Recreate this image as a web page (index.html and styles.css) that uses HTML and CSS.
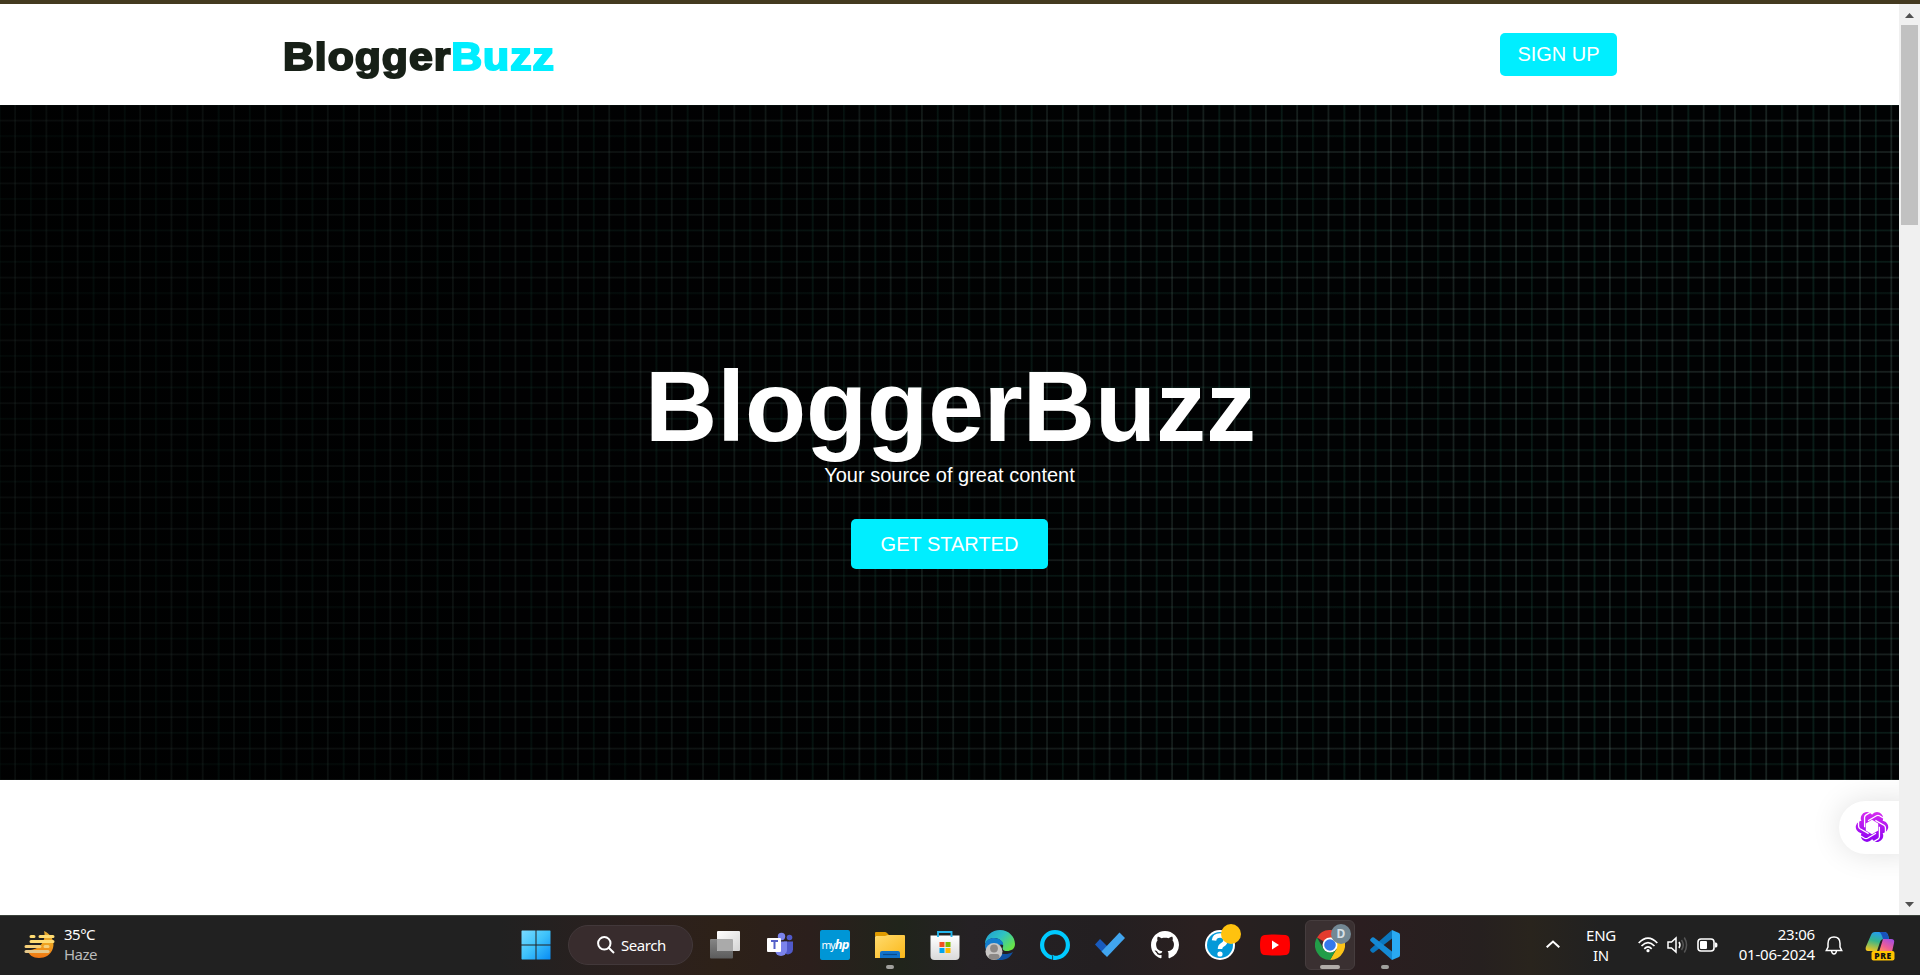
FILE: index.html
```html
<!DOCTYPE html>
<html lang="en">
<head>
<meta charset="utf-8">
<title>BloggerBuzz</title>
<link rel="stylesheet" href="styles.css">
</head>
<body>
<div class="desktop">
  <div class="window-edge"></div>
  <div class="browser">
    <div class="page">
      <header class="header">
        <div class="logo">Blogger<span class="logo-accent">Buzz</span></div>
        <a class="btn signup">SIGN UP</a>
      </header>
      <main class="hero">
        <h1 class="hero-title">BloggerBuzz</h1>
        <p class="hero-sub">Your source of great content</p>
        <a class="btn start">GET STARTED</a>
      </main>
      <div class="assistant">
        <svg width="34" height="34" viewBox="-17 -17 34 34">
          <defs>
            <linearGradient id="pg" gradientUnits="userSpaceOnUse" x1="0" y1="-16" x2="0" y2="16"><stop offset="0" stop-color="#d92cf0"/><stop offset="1" stop-color="#8a00f2"/></linearGradient>
            <mask id="swirl" maskUnits="userSpaceOnUse" x="-17" y="-17" width="34" height="34">
              <g fill="#fff">
                <circle r="11"/>
                <circle id="lobe" cx="5" cy="-8.700" r="6.200"/>
                <use href="#lobe" transform="rotate(60)"/><use href="#lobe" transform="rotate(120)"/><use href="#lobe" transform="rotate(180)"/><use href="#lobe" transform="rotate(240)"/><use href="#lobe" transform="rotate(300)"/>
              </g>
              <path d="M0 -7.200L6.200 -3.600V3.600L0 7.200L-6.200 3.600V-3.600z" fill="#000"/>
              <g fill="none" stroke="#000" stroke-width="1.300">
                <path id="seam" d="M-4 -6.200L4.500 -11.200Q6 -12 7.500 -11.200L12.500 -8.300"/>
                <use href="#seam" transform="rotate(60)"/><use href="#seam" transform="rotate(120)"/><use href="#seam" transform="rotate(180)"/><use href="#seam" transform="rotate(240)"/><use href="#seam" transform="rotate(300)"/>
              </g>
            </mask>
          </defs>
          <rect x="-17" y="-17" width="34" height="34" fill="url(#pg)" mask="url(#swirl)"/>
        </svg>
      </div>
    </div>
    <div class="scrollbar">
      <svg class="arrow" width="21" height="21"><path d="M6 14h9l-4.500-5z" fill="#505050"/></svg>
      <div class="thumb"></div>
      <svg class="arrow down" width="21" height="21"><path d="M6 8h9l-4.500 5z" fill="#505050"/></svg>
    </div>
  </div>

  <footer class="taskbar">
    <div class="weather">
      <svg width="32" height="30" viewBox="0 0 32 30">
        <defs><linearGradient id="moon" x1="0" y1="0" x2="0" y2="1"><stop offset="0" stop-color="#e3a934"/><stop offset=".5" stop-color="#eea321"/><stop offset="1" stop-color="#f07412"/></linearGradient></defs>
        <path d="M20 1C27 4 31 11 29 18C27 25 21 28 15 28C9 28 5 25 3 20C13 21 23 13 20 1Z" fill="url(#moon)"/>
        <g stroke-width="3" stroke-linecap="round"><path d="M7 6.500h3M16 6.500h13M7 11.500h22" stroke="#ffdc73"/><path d="M2 16.500h14M21 16.500h3" stroke="#f5cf78"/><path d="M2 21.500h22" stroke="#e6c88a"/></g>
      </svg>
      <div class="weather-text"><div>35°C</div><div class="muted">Haze</div></div>
    </div>

    <div class="apps">
      <div class="app start-icon"><svg width="30" height="30" viewBox="0 0 30 30">
        <defs><linearGradient id="win" gradientUnits="userSpaceOnUse" x1="0" y1="0" x2="29" y2="29"><stop offset="0" stop-color="#7cdcff"/><stop offset=".5" stop-color="#3fc3fb"/><stop offset="1" stop-color="#0a8df5"/></linearGradient></defs>
        <path d="M1 .500h13.500v14H.500V1zM15.500 .500h13.500l.500.500v13.500h-14zM.500 15.500h14v14H1L.500 29zM15.500 15.500h14V29l-.500.500H15.500z" fill="url(#win)"/></svg></div>
      <div class="search">
        <svg width="18" height="18" viewBox="0 0 18 18" fill="none" stroke="#fff" stroke-width="2"><circle cx="7.300" cy="7.300" r="6.200"/><path d="M11.700 11.700l5.300 5.300"/></svg>
        <span>Search</span>
      </div>
      <div class="app"><svg width="30" height="30" viewBox="0 0 30 30">
        <defs><linearGradient id="tv1" x1="0" y1="0" x2="1" y2="1"><stop offset="0" stop-color="#fff"/><stop offset="1" stop-color="#d4d4d4"/></linearGradient><linearGradient id="tv2" x1="0" y1="0" x2="0" y2="1"><stop offset="0" stop-color="#858585"/><stop offset="1" stop-color="#5c5c5c"/></linearGradient></defs>
        <rect y="9" width="23" height="19.500" rx="1" fill="url(#tv2)"/><rect x="7" y="1" width="23" height="20" rx="1" fill="url(#tv1)"/><path d="M7 9h15q1 0 1 1v11H8q-1 0-1-1z" fill="#aaa"/></svg></div>
      <div class="app"><svg width="30" height="30" viewBox="0 0 30 30">
        <circle cx="24.500" cy="7.500" r="2.800" fill="#5059c9"/><path d="M19 11.500h9v8a5 5 0 0 1-7 4.500z" fill="#5059c9"/><circle cx="16.500" cy="6.500" r="3.700" fill="#7b83eb"/><path d="M10 11.500h12v8.500a6 6 0 0 1-12 0z" fill="#7b83eb"/>
        <rect x="2" y="8" width="14" height="14" rx="1" fill="#fff"/><path d="M6 11h7M9.500 11v8" stroke="#5560c8" stroke-width="2"/></svg></div>
      <div class="app"><div class="myhp">my<b>hp</b></div></div>
      <div class="app"><svg width="30" height="30" viewBox="0 0 30 30">
        <defs><linearGradient id="fold" x1="0" y1="0" x2="1" y2="1"><stop offset="0" stop-color="#ffdb6e"/><stop offset="1" stop-color="#fbb819"/></linearGradient></defs>
        <path d="M0 8V3q0-1 1-1h9q1 0 2 1l3 3H0z" fill="#df9b00"/><path d="M0 7q0-1 1-1h9l3-1h16q1 0 1 1v21q0 1-1 1H0z" fill="url(#fold)"/><path d="M5 28v-5q0-2 2-2h16q2 0 2 2v5z" fill="#1172c9"/><path d="M8 24.500h14" stroke="#084b8d" stroke-width="1.200"/></svg><i class="dot"></i></div>
      <div class="app"><svg width="30" height="30" viewBox="0 0 30 30">
        <defs><linearGradient id="store" x1="0" y1="0" x2="0" y2="1"><stop offset="0" stop-color="#fff"/><stop offset="1" stop-color="#d9d9d9"/></linearGradient></defs>
        <path d="M0.500 5.500h29V26q0 4-4 4h-21q-4 0-4-4z" fill="url(#store)"/><path d="M8 7V2h13.500v5" fill="none" stroke="#25b6ec" stroke-width="1.900"/><path d="M9.500 12h5v5h-5z" fill="#f25022"/><path d="M15.500 12h5v5h-5z" fill="#7fba00"/><path d="M9.500 18h5v5h-5z" fill="#00a4ef"/><path d="M15.500 18h5v5h-5z" fill="#ffb900"/></svg></div>
      <div class="app"><svg width="30" height="30" viewBox="0 0 30 30">
        <defs><linearGradient id="ed1" x1="0" y1="0" x2="1" y2=".7"><stop offset="0" stop-color="#1d9ad7"/><stop offset=".5" stop-color="#2fc2c3"/><stop offset="1" stop-color="#69e445"/></linearGradient></defs>
        <path d="M0 14C0 6 7 0 15 0C24 0 30 7 30 14C30 19 26 21 22 21C18 21 17 19 18 17C19 14 16 8 9 8C5 8 2 10 0 14z" fill="url(#ed1)"/><path d="M0 15C1 10 5 8 9 8C15 8 19 12 18 15C15 13 10 17 12 23C14 27 18 30 15 30C7 30 0 23 0 15z" fill="#127dce"/><path d="M11 17C12 24 20 26 28 22C25 28 21 30 15 30C11 29 9 22 11 17z" fill="#0f51a3"/>
        <circle cx="9" cy="21.500" r="8.500" fill="#c9c7c5"/><circle cx="9" cy="18.500" r="3.900" fill="#8b8886"/><path d="M3.500 28v-1.500q0-2.500 2.500-2.500h6q2.500 0 2.500 2.500V28q-5.500 3.700-11 0z" fill="#8b8886"/></svg></div>
      <div class="app"><svg width="30" height="30" viewBox="0 0 30 30"><circle cx="15" cy="15" r="12.900" fill="none" stroke="#00caff" stroke-width="4.200"/><path d="M12.800 24.500v5.500h1.500Q19 29 22 25L19 25.800Q14 27 12.800 24.500z" fill="#00caff"/><path d="M12.600 26V30" stroke="#242424" stroke-width=".8"/></svg></div>
      <div class="app"><svg width="30" height="30" viewBox="0 0 30 30"><path d="M0 14.500l5-5.500 10.500 10.500L10 25z" fill="#185abd"/><path d="M6.500 21.500L24.500 2.500l5.500 5.500L12 27z" fill="#41a5ee"/></svg></div>
      <div class="app"><svg width="28" height="28" viewBox="0 0 16 16"><path fill="#fff" d="M8 0C3.580 0 0 3.580 0 8c0 3.540 2.290 6.530 5.470 7.590.4.070.55-.17.55-.38 0-.19-.01-.82-.01-1.490-2.010.37-2.530-.49-2.690-.94-.09-.23-.48-.94-.82-1.130-.28-.15-.68-.52-.01-.53.63-.01 1.080.58 1.230.82.72 1.210 1.870.87 2.330.66.07-.52.28-.87.51-1.070-1.780-.2-3.640-.89-3.640-3.950 0-.87.31-1.590.82-2.150-.08-.2-.36-1.020.08-2.120 0 0 .67-.21 2.200.82.64-.18 1.320-.27 2-.27s1.360.09 2 .27c1.530-1.040 2.200-.82 2.200-.82.44 1.100.16 1.920.08 2.120.51.56.82 1.270.82 2.150 0 3.070-1.870 3.750-3.650 3.950.29.25.54.73.54 1.480 0 1.070-.01 1.930-.01 2.200 0 .21.15.46.55.38A8.010 8.010 0 0 0 16 8c0-4.420-3.580-8-8-8z"/></svg></div>
      <div class="app"><svg class="help" width="36" height="36" viewBox="0 0 36 36"><circle cx="15" cy="21" r="15" fill="#fff"/><circle cx="15" cy="21" r="13" fill="#0499d8"/><path d="M9 16.500Q9.500 11.500 15 11.500T20.500 16.500Q20.500 19 17.500 20.800Q15 22.200 15 25" fill="none" stroke="#fff" stroke-width="4.500"/><circle cx="15" cy="30" r="2.600" fill="#fff"/><circle cx="26" cy="10" r="10" fill="#ffc20e"/></svg></div>
      <div class="app"><svg width="30" height="30" viewBox="0 0 30 30"><path d="M4.500 5Q15 4 25.500 5Q29 5.500 29.500 9Q30.500 15 29.500 21Q29 24.700 25.500 25Q15 26 4.500 25Q1 24.700.500 21Q-.500 15 .500 9Q1 5.500 4.500 5z" fill="#f00"/><path d="M12 10.500v9l7-4.500z" fill="#fff"/></svg></div>
      <div class="app active"><svg width="30" height="30" viewBox="0 0 30 30"><path d="M15 15L2 7.500A15 15 0 0 1 28 7.500z" fill="#e33b2e"/><path d="M15 15V7.500h13A15 15 0 0 1 15 30L21.500 19z" fill="#fcc419"/><path d="M2 7.500L8.500 18.700Q11 22.500 15 22.500Q19 22.500 21.500 18.700L15 30A15 15 0 0 1 2 7.500z" fill="#229d48"/><circle cx="15" cy="15" r="7.500" fill="#fff"/><circle cx="15" cy="15" r="5.800" fill="#3478ec"/></svg><span class="badge">D</span><i class="dot wide"></i></div>
      <div class="app"><svg width="30" height="30" viewBox="0 0 30 30"><path d="M1 18.500L22 0v8.500L4 22.500q-1 .700-2 0L.500 21Q-.500 19.800 1 18.500z" fill="#0b76bd"/><path d="M1 11.500L22 30v-8.500L4 7.500q-1-.700-2 0L.500 9Q-.500 10.200 1 11.500z" fill="#158ad4"/><path d="M22 0l7 3q1 .500 1 2v20q0 1.500-1 2l-7 3z" fill="#29a9f2"/></svg><i class="dot"></i></div>
    </div>

    <div class="tray">
      <svg class="chev" width="14" height="8" fill="none" stroke="#fff" stroke-width="2"><path d="M.700 7.300L7 1.500l6.300 5.800"/></svg>
      <div class="lang">ENG<br>IN</div>
      <svg class="wifi" width="20" height="16" viewBox="0 0 20 16" fill="none" stroke="#fff" stroke-width="1.700"><path d="M.700 6Q10-3.700 19.300 6M3.500 9Q10 2.200 16.500 9M6.300 11.800Q10 8 13.700 11.800"/><circle cx="10" cy="13.700" r="1.600" fill="#fff" stroke="none"/></svg>
      <svg class="vol" width="21" height="18" viewBox="0 0 21 18" fill="none" stroke="#fff" stroke-width="1.500"><path d="M1 6h3.500L9 2v14l-4.500-4H1z"/><path d="M12 6q2 3 0 6"/><path d="M14.500 4q3.500 5 0 10M17.300 1.500q4.500 7.500 0 15" stroke="#555"/></svg>
      <svg class="batt" width="21" height="14" viewBox="0 0 21 14"><rect x="1" y="1" width="16" height="12" rx="3" fill="none" stroke="#fff" stroke-width="1.600"/><rect x="3" y="3" width="7" height="8" rx="1" fill="#fff"/><path d="M18 4.500h1q1.500 0 1.500 2.500T19 9.500h-1z" fill="#fff"/></svg>
      <div class="clock">23:06<br>01-06-2024</div>
      <svg class="bell" width="18" height="19" viewBox="0 0 18 19" fill="none" stroke="#fff" stroke-width="1.500"><path d="M3 7.500Q3 1 9 1T15 7.500V11l1.700 3.500H1.300L3 11zM6.500 15Q7 18 9 18T11.500 15"/></svg>
      <svg class="copilot" width="30" height="30" viewBox="0 0 30 30">
        <defs><linearGradient id="cp1" x1=".5" y1="0" x2=".2" y2="1"><stop offset="0" stop-color="#249df0"/><stop offset=".45" stop-color="#35b58b"/><stop offset="1" stop-color="#f4c51e"/></linearGradient><linearGradient id="cp2" x1=".8" y1="0" x2=".2" y2="1"><stop offset="0" stop-color="#a44de2"/><stop offset=".6" stop-color="#ee5e96"/><stop offset="1" stop-color="#ff905c"/></linearGradient></defs>
        <path d="M6 4Q7 1 10 1h9q3 0 4 3l1 4h-5q-3 0-4 3l-3 9H3Q0 20 .800 16z" fill="url(#cp1)"/><path d="M14 1h5q3 0 4 3l1 4h-6q-2-7-4-7z" fill="#1852bd"/><path d="M18 8h8q4 0 3 4l-2 9H14z" fill="url(#cp2)"/>
        <rect x="6.500" y="20" width="23" height="9.500" rx="2" fill="#ffc400"/><text x="18" y="27.600" text-anchor="middle" class="pre">PRE</text></svg>
    </div>
  </footer>
</div>
</body>
</html>
```
FILE: styles.css
```css
* { box-sizing: border-box; }
body { margin: 0; overflow: hidden; font-family: "Liberation Sans", Arial, sans-serif; }
svg { display: block; flex: none; }
.desktop { display: flex; flex-direction: column; height: 975px; width: 1920px; }
.window-edge { height: 4px; background: #443a20; }
.browser { display: flex; height: 911px; }
.page { position: relative; width: 1899px; background: #fff; overflow: hidden; }

.header { display: flex; justify-content: space-between; align-items: flex-start; height: 101px; padding: 29px 282px 0 283px; }
.logo { font-size: 39px; line-height: 46px; padding-top: 1px; font-weight: 700; color: #172017; -webkit-text-stroke: 2px currentColor; letter-spacing: .9px; transform: scaleX(1.095); transform-origin: 0 0; }
.logo-accent { color: #00eeff; }
.btn { background: #00eeff; color: #fff; font-size: 20px; border-radius: 5px; text-align: center; white-space: nowrap; }
.signup { width: 117px; height: 43px; line-height: 42px; }

.hero {
  height: 675px; display: flex; flex-direction: column; align-items: center; padding-top: 244px; color: #fff;
  background:
    linear-gradient(90deg, rgba(0,0,0,.62), rgba(0,0,0,.5) 25%, rgba(0,0,0,.15) 60%, transparent 85%),
    repeating-linear-gradient(90deg, #1f65502b 0 .5px, transparent 1.300px 13.700px, #68908438 14.700px 15.500px, transparent 16.500px 29.500px, #1f655040 30.600px 31.270px),
    repeating-linear-gradient(180deg, #2262502b 0 .5px, transparent 1.300px 14.200px, #70908834 15.200px 16px, transparent 17px 29.800px, #22625040 30.900px 31.400px),
    #010203;
}
.hero-title { margin: 0; font-size: 100px; line-height: 114px; font-weight: 700; transform: translateX(1px); }
.hero-sub { margin: 0; font-size: 20px; line-height: 24px; }
.start { margin-top: 32px; width: 197px; height: 50px; line-height: 50px; }

.assistant { position: absolute; left: 1839px; top: 797px; width: 80px; height: 53px; padding: 9px 0 0 16px; background: #fff; border-radius: 27px 0 0 27px; box-shadow: 0 0 30px rgba(0,0,0,.12); }

.scrollbar { width: 21px; display: flex; flex-direction: column; align-items: center; background: #f0f0f0; }
.thumb { width: 17px; height: 200px; background: #c1c1c1; }
.down { margin-top: auto; }

.taskbar {
  height: 60px; display: grid; grid-template-columns: 514px 1fr auto; border-top: 1px solid #3a413a; color: #fff;
  font-family: "Noto Sans", sans-serif; font-size: 15px; line-height: 20px;
  background: linear-gradient(90deg, #212121 0 500px, #2c201e 640px, #2d2118 720px, #2b1f1c 810px, #20241b 900px, #252124 970px, #231f21 1100px, #2a2020 1200px, #242020 1300px, #2b1e20 1360px, #26201f 1480px, #29241d 1530px, #212121 1600px);
}
.weather { display: flex; padding: 14px 0 0 24px; gap: 8px; }
.weather-text { margin-top: -6px; letter-spacing: -.5px; }
.muted { color: #bbb; }

.apps { display: flex; align-items: center; padding-bottom: 1px; }
.app { position: relative; width: 50px; height: 50px; margin-right: 5px; display: flex; flex: none; align-items: center; justify-content: center; border-radius: 6px; }
.start-icon { width: 43px; margin-right: 11px; }
.search { width: 125px; height: 40px; border-radius: 20px; background: #382c2d; border: 1px solid #42383a; display: flex; align-items: center; gap: 6px; padding-left: 28px; margin-right: 7px; letter-spacing: -.45px; flex: none; }
.active { background: #3a3031; border: 1px solid #463d3e; }
.dot { position: absolute; bottom: 1px; left: 21px; width: 8px; height: 4px; border-radius: 2px; background: #a0a09c; }
.wide { width: 20px; left: 14px; bottom: 0; background: #b1aca8; }
.badge { position: absolute; left: 25px; top: 3px; width: 20px; height: 20px; border-radius: 50%; background: #738894; color: #d7e0e6; font-size: 12px; font-weight: 700; text-align: center; }
.myhp { width: 30px; height: 30px; border-radius: 2px; background: #0096d6; font-size: 10.5px; line-height: 29px; letter-spacing: -.9px; text-align: center; }
.myhp b { font-style: italic; font-size: 13px; }
.help { margin: -6px 0 0 6px; }

.tray { display: flex; align-items: flex-start; padding-right: 25px; }
.chev { margin: 24px 26px 0 0; }
.lang { width: 30px; margin: 9px 22px 0 0; text-align: center; letter-spacing: -.3px; }
.wifi { margin: 21px 9px 0 0; }
.vol { margin: 20px 9px 0 0; }
.batt { margin: 22px 0 0; }
.clock { width: 97px; margin: 8px 10px 0 0; text-align: right; letter-spacing: -.2px; }
.bell { margin: 20px 22px 0 0; }
.copilot { margin-top: 15px; }
.pre { font: 800 8.500px "Open Sans", sans-serif; fill: #111; letter-spacing: .6px; }
```
